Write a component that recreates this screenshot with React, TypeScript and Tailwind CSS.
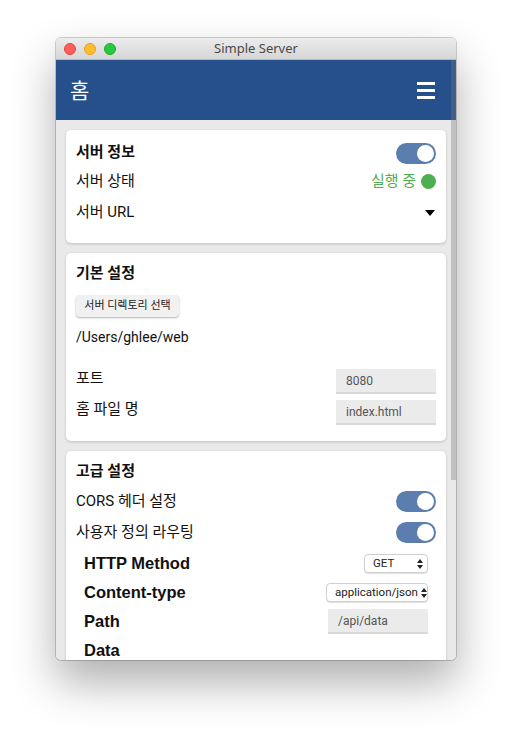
import React from "react";

const FONT = { fontFamily: 'Roboto, "Noto Sans CJK KR", sans-serif' };

function Toggle() {
  return (
    <div className="relative w-[40px] h-[21px] rounded-full bg-[#5b7eae]">
      <div className="absolute right-[2px] top-[2px] w-[17px] h-[17px] rounded-full bg-white" />
    </div>
  );
}

function UpDown() {
  return (
    <svg width="6" height="10" viewBox="0 0 6 10" className="shrink-0">
      <path d="M3 0 L6 4 L0 4 Z" fill="#222" />
      <path d="M0 6 L6 6 L3 10 Z" fill="#222" />
    </svg>
  );
}

function Select({ value, w }: { value: string; w: string }) {
  return (
    <div
      className={`${w} h-[19px] flex items-center justify-between gap-[3px] pl-[8px] pr-[4px] bg-white border border-[#cfcfcf] rounded-[4px] shadow-[0_1px_1px_rgba(0,0,0,0.12)] text-[11.5px] font-normal text-[#222]`}
      style={FONT}
    >
      <span className="whitespace-nowrap">{value}</span>
      <UpDown />
    </div>
  );
}

function Input({ value }: { value: string }) {
  return (
    <div className="w-[100px] h-[25px] bg-[#ebebeb] border-b-[2px] border-[#d9d9d9] flex items-center pl-[10px] text-[12px] font-normal text-[#555]" style={FONT}>
      {value}
    </div>
  );
}

export default function App() {
  return (
    <div className="w-[512px] h-[734px] bg-white pt-[38px] pl-[56px]" style={FONT}>
      <div className="w-[400px] h-[622px] rounded-[5px] overflow-hidden flex flex-col shadow-[0_0_0_1px_rgba(0,0,0,0.18),0_22px_45px_rgba(0,0,0,0.32)]">
        {/* Title bar */}
        <div className="relative h-[22px] shrink-0 bg-gradient-to-b from-[#ececec] to-[#d6d6d6] border-b border-[#b9b9b9] flex items-center">
          <div className="flex items-center gap-[8px] pl-[8px]">
            <div className="w-[12px] h-[12px] rounded-full bg-[#fd5e57] border border-[#e0443e]" />
            <div className="w-[12px] h-[12px] rounded-full bg-[#febc2e] border border-[#dea123]" />
            <div className="w-[12px] h-[12px] rounded-full bg-[#28c840] border border-[#1aab29]" />
          </div>
          <div className="absolute inset-0 flex items-center justify-center text-[13px] text-[#4a4a4a]" style={{ fontFamily: '"Noto Sans", sans-serif' }}>
            Simple Server
          </div>
        </div>

        <div className="relative flex-1 flex flex-col overflow-hidden">
          {/* Header */}
          <div className="h-[60px] shrink-0 bg-[#26508b] flex items-center justify-between pl-[14px] pr-[21px]">
            <span className="text-white text-[21px]" style={{ fontFamily: '"Noto Sans CJK KR", sans-serif', fontWeight: 400 }}>홈</span>
            <div className="flex flex-col gap-[4px]">
              <div className="w-[18px] h-[3px] bg-white" />
              <div className="w-[18px] h-[3px] bg-white" />
              <div className="w-[18px] h-[3px] bg-white" />
            </div>
          </div>

          {/* Content */}
          <div className="flex-1 bg-[#e9e9e9] px-[10px] pt-[10px] flex flex-col gap-[10px] overflow-hidden text-[15px] text-[#111]">
            {/* Card 1 */}
            <div className="bg-white rounded-[5px] shadow-[0_1px_3px_rgba(0,0,0,0.18)] px-[10px] pt-[10px] pb-[15px]">
              <div className="h-[26px] flex items-center justify-between">
                <span className="font-bold -mt-[2px]">서버 정보</span>
                <Toggle />
              </div>
              <div className="h-[31px] flex items-center justify-between">
                <span>서버 상태</span>
                <div className="flex items-center gap-[5px]">
                  <span className="text-[#4caf50]">실행 중</span>
                  <div className="w-[15px] h-[15px] rounded-full bg-[#4caf50]" />
                </div>
              </div>
              <div className="h-[31px] flex items-center justify-between">
                <span>서버 URL</span>
                <svg width="10" height="6" viewBox="0 0 10 6" className="mr-[1px]">
                  <path d="M0 0 L10 0 L5 6 Z" fill="#000" />
                </svg>
              </div>
            </div>

            {/* Card 2 */}
            <div className="bg-white rounded-[5px] shadow-[0_1px_3px_rgba(0,0,0,0.18)] px-[10px] pt-[10px] pb-[16px]">
              <div className="h-[20px] flex items-center">
                <span className="font-bold">기본 설정</span>
              </div>
              <div className="mt-[12px] w-[103px] h-[22px] rounded-[4px] bg-[#f1f1f1] shadow-[0_1px_2px_rgba(0,0,0,0.3)] flex items-center justify-center text-[11px] text-[#222]">
                서버 디렉토리 선택
              </div>
              <div className="mt-[10px] h-[20px] flex items-center text-[14px]">/Users/ghlee/web</div>
              <div className="mt-[22px] h-[25px] flex items-center justify-between">
                <span className="pb-[6px]">포트</span>
                <Input value="8080" />
              </div>
              <div className="mt-[6px] h-[25px] flex items-center justify-between">
                <span className="pb-[6px]">홈 파일 명</span>
                <Input value="index.html" />
              </div>
            </div>

            {/* Card 3 */}
            <div className="bg-white rounded-[5px] shadow-[0_1px_3px_rgba(0,0,0,0.18)] px-[10px] pt-[10px] pb-[16px] shrink-0">
              <div className="h-[20px] flex items-center">
                <span className="font-bold">고급 설정</span>
              </div>
              <div className="mt-[5px] h-[31px] flex items-center justify-between">
                <span>CORS 헤더 설정</span>
                <Toggle />
              </div>
              <div className="h-[31px] flex items-center justify-between">
                <span>사용자 정의 라우팅</span>
                <Toggle />
              </div>
              <div className="mt-[1px] px-[8px] flex flex-col text-[16.5px] font-bold" style={{ fontFamily: '"Liberation Sans", sans-serif' }}>
                <div className="h-[29px] flex items-center justify-between">
                  <span>HTTP Method</span>
                  <Select value="GET" w="w-[64px]" />
                </div>
                <div className="h-[29px] flex items-center justify-between">
                  <span>Content-type</span>
                  <Select value="application/json" w="w-[102px]" />
                </div>
                <div className="h-[29px] flex items-center justify-between">
                  <span>Path</span>
                  <Input value="/api/data" />
                </div>
                <div className="h-[29px] flex items-center justify-between">
                  <span>Data</span>
                </div>
              </div>
            </div>
          </div>

          {/* Scrollbar overlay */}
          <div className="absolute right-0 top-0 w-[5px] h-[420px] bg-[rgba(120,120,120,0.35)]" />
        </div>
      </div>
    </div>
  );
}
